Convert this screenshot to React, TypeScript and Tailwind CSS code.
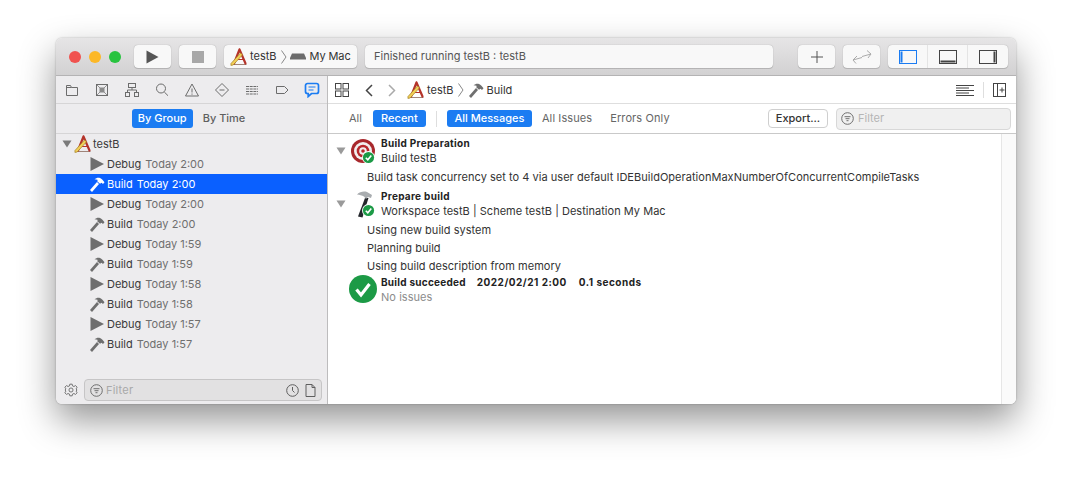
import type { ReactNode } from "react";

const times = [
  { kind: "Debug", time: "2:00" },
  { kind: "Build", time: "2:00", selected: true },
  { kind: "Debug", time: "2:00" },
  { kind: "Build", time: "2:00" },
  { kind: "Debug", time: "1:59" },
  { kind: "Build", time: "1:59" },
  { kind: "Debug", time: "1:58" },
  { kind: "Build", time: "1:58" },
  { kind: "Debug", time: "1:57" },
  { kind: "Build", time: "1:57" },
];

function XcodeIcon({ size = 18 }: { size?: number }) {
  return (
    <svg width={size} height={size} viewBox="0 0 18 18" fill="none">
      <path d="M1.5 16.500h15" stroke="#8a6a5a" strokeWidth="0.8" />
      <path d="M9.500 1.500 4 15.500M9.500 1.500 15.500 15.500" stroke="#b5332a" strokeWidth="2.200" strokeLinecap="round" />
      <path d="M5.500 11.500h8" stroke="#b5332a" strokeWidth="1.200" />
      <path d="M1 15.500 10.500 5l2 1.800-9.300 10.200-2.300.4z" fill="#f2cf57" stroke="#a08024" strokeWidth="0.7" />
    </svg>
  );
}

function Hammer({ color = "#6f6f6f", size = 16 }: { color?: string; size?: number }) {
  return (
    <svg width={size} height={size} viewBox="0 0 16 16">
      <path d="M1 14l2 2 7-8-2-2z" fill={color} />
      <path d="M5.500 3.200C7.200 1.800 9.400 1.200 11 2c1.700.8 3.300 2.500 4.500 4.200L14 8l-1.500-1.300-1.500 1-3-2.700 1-1C7.800 3.400 6.600 3.200 5.500 3.200z" fill={color} />
    </svg>
  );
}

function Play() {
  return (
    <svg width="16" height="16" viewBox="0 0 16 16">
      <path d="M1.500 1v14L15 8z" fill="#6e6e6e" />
    </svg>
  );
}

function Disclosure({ color = "#7a7a7a" }: { color?: string }) {
  return (
    <svg width="10" height="8" viewBox="0 0 10 8">
      <path d="M0.500 0.500h9L5 7.500z" fill={color} />
    </svg>
  );
}

function Glyph({ children, w = 16, h = 16, stroke = "#6c6c6c" }: { children: ReactNode; w?: number; h?: number; stroke?: string }) {
  return (
    <svg width={w} height={h} viewBox={`0 0 ${w} ${h}`} fill="none" stroke={stroke} strokeWidth="1">
      {children}
    </svg>
  );
}

function Check({ size = 13 }: { size?: number }) {
  return (
    <svg width={size} height={size} viewBox="0 0 13 13" className="block">
      <circle cx="6.500" cy="6.500" r="6.500" fill="#fff" />
      <circle cx="6.500" cy="6.500" r="5.600" fill="#1c9a46" />
      <path d="M3.800 6.700 5.800 8.800 9.300 4.400" fill="none" stroke="#fff" strokeWidth="1.600" />
    </svg>
  );
}

function NavIcons() {
  return (
    <div className="flex h-7 items-center border-b border-[#d6d5d6] pl-px pt-px">
      <div className="flex w-[30px] justify-center">
        <Glyph>
          <path d="M2.500 3.500h4l1 2h6v8h-11z" />
          <path d="M2.500 5.500h5" />
        </Glyph>
      </div>
      <div className="flex w-[30px] justify-center">
        <Glyph>
          <rect x="2.500" y="2.500" width="11" height="11" />
          <path d="M2.500 2.500l11 11M13.500 2.500l-11 11" strokeWidth="0.7" />
          <rect x="5.500" y="5.500" width="5" height="5" fill="#8a8a8a" stroke="none" />
        </Glyph>
      </div>
      <div className="flex w-[30px] justify-center">
        <Glyph>
          <rect x="4.500" y="1.500" width="7" height="4" />
          <rect x="1.500" y="10.500" width="4" height="4" />
          <rect x="10.500" y="10.500" width="4" height="4" />
          <path d="M3.500 10.500V8h9v2.500M8 5.500V8" />
        </Glyph>
      </div>
      <div className="flex w-[30px] justify-center">
        <Glyph>
          <circle cx="7" cy="6.500" r="4.500" />
          <path d="M10.300 10 14 13.700" />
        </Glyph>
      </div>
      <div className="flex w-[30px] justify-center">
        <Glyph>
          <path d="M8 2 14.500 14h-13z" />
          <path d="M8 6.500v4M8 11.500v1.200" />
        </Glyph>
      </div>
      <div className="flex w-[30px] justify-center">
        <Glyph>
          <path d="M8 1.500 14.500 8 8 14.500 1.500 8z" strokeLinejoin="round" />
          <path d="M5.500 8h5" />
        </Glyph>
      </div>
      <div className="flex w-[30px] justify-center">
        <Glyph>
          <path d="M2 4.500h12M2 7h12M2 9.500h12M2 12h12" strokeDasharray="3 0.7" />
        </Glyph>
      </div>
      <div className="flex w-[30px] justify-center">
        <Glyph>
          <path d="M2.500 4.500h8l3.500 3.500-3.500 3.500h-8z" />
        </Glyph>
      </div>
      <div className="flex w-[30px] justify-center">
        <svg width="16" height="16" viewBox="0 0 16 16" fill="none">
          <path d="M3.500 1.500h9a2 2 0 0 1 2 2v6a2 2 0 0 1-2 2H7.500L4.200 14.500v-3h-.7a2 2 0 0 1-2-2v-6a2 2 0 0 1 2-2z" stroke="#1b7cf2" strokeWidth="1.700" />
          <path d="M4.500 5h7M4.500 8h5" stroke="#1b7cf2" strokeWidth="1.200" />
        </svg>
      </div>
    </div>
  );
}

function FilterIcon() {
  return (
    <svg width="13" height="13" viewBox="0 0 13 13" fill="none" stroke="#6e6e6e">
      <circle cx="6.500" cy="6.500" r="5.800" />
      <path d="M3.500 4.700h6M4.500 6.700h4M5.500 8.700h2" />
    </svg>
  );
}

function Sidebar() {
  return (
    <aside className="flex w-[272px] flex-col border-r border-[#bdbcbd] bg-[#edecee]">
      <NavIcons />
      <div className="flex h-[30px] items-center justify-center border-b border-[#d6d5d6] pr-[7px] text-[11px] font-medium">
        <span className="ml-[1px] flex h-[19px] w-[61px] items-center justify-center rounded-[3px] bg-[#1b7cf2] text-white">By Group</span>
        <span className="ml-[10px] text-[#5f5f5f]">By Time</span>
      </div>
      <div className="flex-1">
        <div className="flex h-5 items-center pl-[6px] text-[11px] text-[#3a3a3a]">
          <Disclosure />
          <span className="ml-[2px] flex"><XcodeIcon /></span>
          <span className="ml-[1px]">testB</span>
        </div>
        {times.map((t, i) => (
          <div key={i} className={`flex h-5 items-center pl-[33px] text-[11px] ${t.selected ? "bg-[#0a60ff] text-white" : "text-[#3a3a3a]"}`}>
            <span className="flex w-4">
              {t.kind === "Debug" ? <Play /> : <Hammer color={t.selected ? "#ffffff" : "#6f6f6f"} />}
            </span>
            <span className="ml-[2px]">{t.kind}</span>
            <span className={`ml-[4px] ${t.selected ? "text-white" : "text-[#6f6f6f]"}`}>Today {t.time}</span>
          </div>
        ))}
      </div>
      <div className="flex h-[25px] items-start pl-[8px]">
        <svg width="14" height="14" viewBox="0 0 24 24" fill="none" stroke="#666" strokeWidth="1.500" className="mt-[4px]">
          <circle cx="12" cy="12" r="3.500" />
          <path d="M10 2h4l.6 3 2.500 1 2.600-1.600 2.800 2.800L20.900 10l1.100 2-1.100 2 1.600 2.800-2.800 2.800-2.600-1.600-2.500 1-.6 3h-4l-.6-3-2.500-1-2.600 1.600-2.800-2.800L3.100 14 2 12l1.100-2-1.600-2.800 2.800-2.800 2.600 1.600 2.500-1z" strokeLinejoin="round" />
        </svg>
        <div className="ml-[6px] flex h-[22px] w-[238px] items-center rounded-[4px] border border-[#c6c5c6] bg-[#e2e1e2] px-[5px] text-[11px] tracking-[0.2px] text-[#a9a9a9]">
          <FilterIcon />
          <span className="ml-[3px]">Filter</span>
          <span className="ml-auto flex items-center gap-[6px]">
            <svg width="13" height="13" viewBox="0 0 13 13" fill="none" stroke="#5e5e5e">
              <circle cx="6.500" cy="6.500" r="5.800" />
              <path d="M6.500 3v3.500l2 2" />
            </svg>
            <svg width="11" height="13" viewBox="0 0 11 13" fill="none" stroke="#5e5e5e">
              <path d="M1 .5h6l3 3v9H1zM7 .5v3h3" />
            </svg>
          </span>
        </div>
      </div>
    </aside>
  );
}

function Breadcrumb() {
  return (
    <div className="flex h-7 items-center border-b border-[#dedede] pl-[7px] pr-[10px] pt-px text-[11px] text-[#333]">
      <svg width="14" height="14" viewBox="0 0 14 14" fill="none" stroke="#444">
        <rect x=".5" y=".5" width="5.500" height="5.500" />
        <rect x="8" y=".5" width="5.500" height="5.500" />
        <rect x=".5" y="8" width="5.500" height="5.500" />
        <rect x="8" y="8" width="5.500" height="5.500" />
      </svg>
      <svg width="8" height="13" viewBox="0 0 8 13" fill="none" stroke="#444" strokeWidth="1.500" className="ml-[16px]">
        <path d="M7 1 1.500 6.500 7 12" />
      </svg>
      <svg width="8" height="13" viewBox="0 0 8 13" fill="none" stroke="#aaa" strokeWidth="1.500" className="ml-[15px]">
        <path d="M1 1l5.500 5.500L1 12" />
      </svg>
      <span className="ml-[11px] flex"><XcodeIcon /></span>
      <span className="ml-[2px]">testB</span>
      <svg width="6" height="14" viewBox="0 0 6 14" fill="none" stroke="#888" className="ml-[4px]">
        <path d="M.5.500 5 7 .5 13.500" />
      </svg>
      <span className="ml-[4px] flex"><Hammer /></span>
      <span className="ml-[3px]">Build</span>
      <svg width="18" height="13" viewBox="0 0 18 13" fill="none" stroke="#444" className="ml-auto">
        <path d="M0 1.500h18M0 4h13M0 6.500h18M0 9h13M0 11.500h18" />
      </svg>
      <span className="ml-[9px] h-4 w-px bg-[#dedede]" />
      <svg width="13" height="14" viewBox="0 0 13 14" fill="none" stroke="#444" className="ml-[9px]">
        <rect x=".5" y=".5" width="12" height="13" />
        <path d="M4.500.500v13M6.500 7h5M9 4.500v5" />
      </svg>
    </div>
  );
}

function FilterBar() {
  return (
    <div className="flex h-[30px] items-center border-b border-[#c9c9c9] text-[11px] text-[#666]">
      <span className="ml-[21px]">All</span>
      <span className="ml-[11px] flex h-[17px] w-[53px] items-center justify-center rounded-[3px] bg-[#1b7cf2] font-medium text-white">Recent</span>
      <span className="ml-[10px] h-4 w-px bg-[#dedede]" />
      <span className="ml-[10px] flex h-[17px] w-[85px] items-center justify-center rounded-[3px] bg-[#1b7cf2] font-medium text-white">All Messages</span>
      <span className="ml-[10px] tracking-[0.1px]">All Issues</span>
      <span className="ml-[18px] tracking-[0.1px]">Errors Only</span>
      <span className="ml-auto flex h-[19px] w-[60px] items-center justify-center rounded-[4px] border border-[#cfcfcf] bg-white font-medium text-[#333]">Export...</span>
      <div className="ml-[8px] mr-[5px] flex h-[22px] w-[175px] items-center rounded-[4px] border border-[#d8d8d8] bg-[#f0f0f0] px-[4px] text-[#b5b5b5]">
        <FilterIcon />
        <span className="ml-[4px]">Filter</span>
      </div>
    </div>
  );
}

function Line({ children, className = "" }: { children: ReactNode; className?: string }) {
  return <div className={`flex h-[18px] items-center pl-[39px] text-[11px] tracking-[0.03px] text-[#333] ${className}`}>{children}</div>;
}

function Group({ icon, title, sub, className = "" }: { icon: ReactNode; title: string; sub: string; className?: string }) {
  return (
    <div className={`flex h-[30px] ${className}`}>
      <span className="ml-[8px] mt-[11px]"><Disclosure color="#9a9a9a" /></span>
      <div className="relative ml-[5px] h-[30px] w-[25px]">{icon}</div>
      <div className="ml-[5px] text-[11px] leading-[15px]">
        <div className="text-[10px] font-bold tracking-[0.3px] text-[#222]">{title}</div>
        <div className="tracking-[0.03px] text-[#333]">{sub}</div>
      </div>
    </div>
  );
}

function TargetIcon() {
  return (
    <>
      <svg width="25" height="25" viewBox="0 0 25 25" className="mt-[3px]">
        <circle cx="12" cy="12" r="12" fill="#a8282c" />
        <circle cx="12" cy="12" r="9" fill="#f3eeee" />
        <circle cx="12" cy="12" r="6.300" fill="#b8282c" />
        <circle cx="12" cy="12" r="3.800" fill="#f3eeee" />
        <circle cx="12" cy="12" r="1.800" fill="#b8282c" />
      </svg>
      <span className="absolute left-[11px] top-[15px]"><Check /></span>
    </>
  );
}

function HammerBadgeIcon() {
  return (
    <>
      <svg width="20" height="30" viewBox="0 0 20 30" className="ml-[4px]">
        <path d="M10 9h3.500L7.500 28.500 3 27.500z" fill="#23262b" />
        <path d="M2 5.500C5 2.500 9 2 12 3l5 3-1 3-3-1-2 2-2-2.500C7 6.500 4.500 5.500 2 5.500z" fill="#a9adb0" />
      </svg>
      <span className="absolute left-[11px] top-[15px]"><Check /></span>
    </>
  );
}

function Log() {
  return (
    <div className="flex-1 border-r border-[#e6e6e6] pt-[2px]">
      <Group icon={<TargetIcon />} title="Build Preparation" sub="Build testB" />
      <Line className="mt-[2px]">Build task concurrency set to 4 via user default IDEBuildOperationMaxNumberOfConcurrentCompileTasks</Line>
      <Group className="mt-[3px]" icon={<HammerBadgeIcon />} title="Prepare build" sub="Workspace testB | Scheme testB | Destination My Mac" />
      <Line className="mt-[2px]">Using new build system</Line>
      <Line>Planning build</Line>
      <Line>Using build description from memory</Line>
      <div className="flex h-[30px]">
        <svg width="28" height="28" viewBox="0 0 28 28" className="ml-[21px]">
          <circle cx="14" cy="14" r="14" fill="#1c9a46" />
          <path d="M7.500 14.500 12 20l8.500-11" fill="none" stroke="#fff" strokeWidth="3.200" />
        </svg>
        <div className="ml-[4px] text-[11px] leading-[15px]">
          <div className="flex text-[10px] font-bold text-[#222]">
            <span className="tracking-[0.25px]">Build succeeded</span>
            <span className="ml-[11px] tracking-[0.5px]">2022/02/21 2:00</span>
            <span className="ml-[12px] tracking-[0.5px]">0.1 seconds</span>
          </div>
          <div className="tracking-[0.05px] text-[#8c8c8c]">No issues</div>
        </div>
      </div>
    </div>
  );
}

function TitleButton({ children, className = "" }: { children: ReactNode; className?: string }) {
  return (
    <div className={`flex h-[23px] items-center justify-center rounded-[4px] bg-[#f8f8f8] shadow-[0_0_1px_rgba(0,0,0,0.35),0_1px_0_rgba(0,0,0,0.12)] ${className}`}>
      {children}
    </div>
  );
}

function TitleBar() {
  return (
    <header className="flex h-[38px] items-center border-b border-[#b4b3b4] bg-gradient-to-b from-[#e6e5e6] to-[#d2d1d2] pl-[13px] pr-[8px]">
      <span className="h-3 w-3 rounded-full bg-[#f0524f]" />
      <span className="ml-2 h-3 w-3 rounded-full bg-[#fcb827]" />
      <span className="ml-2 h-3 w-3 rounded-full bg-[#28c33f]" />
      <TitleButton className="ml-[13px] w-[37px]">
        <svg width="13" height="14" viewBox="0 0 13 14"><path d="M.5.500v13L12.500 7z" fill="#555" /></svg>
      </TitleButton>
      <TitleButton className="ml-2 w-[37px]">
        <span className="h-3 w-3 bg-[#a8a8a8]" />
      </TitleButton>
      <TitleButton className="ml-2 w-[133px] justify-start pl-[6px] text-[11px] text-[#333]">
        <XcodeIcon />
        <span className="ml-[2px]">testB</span>
        <svg width="6" height="14" viewBox="0 0 6 14" fill="none" stroke="#888" className="ml-[4px]">
          <path d="M.5.500 5 7 .5 13.500" />
        </svg>
        <svg width="16" height="7" viewBox="0 0 16 7" className="ml-[3px]">
          <path d="M2 .5h12l2 4.500v1.500H0V5z" fill="#6c6c6c" />
        </svg>
        <span className="ml-[4px] tracking-[-0.1px]">My Mac</span>
      </TitleButton>
      <TitleButton className="ml-2 w-[408px] justify-start pl-[9px] text-[11px] text-[#555]">Finished running testB : testB</TitleButton>
      <TitleButton className="ml-[25px] w-[37px]">
        <svg width="12" height="12" viewBox="0 0 12 12" stroke="#555"><path d="M6 0v12M0 6h12" /></svg>
      </TitleButton>
      <TitleButton className="ml-2 w-[37px]">
        <svg width="20" height="14" viewBox="0 0 20 14" fill="none" stroke="#aaa">
          <path d="M10 6.500l9-2.500M15 .5l4 3.500-3 4" />
          <path d="M10 7.500l-9 2.500M5 6l-4 4 3 3.500" />
        </svg>
      </TitleButton>
      <TitleButton className="ml-2 w-[120px]">
        <div className="flex h-full w-10 items-center justify-center border-r border-[#e4e4e4]">
          <svg width="18" height="14" viewBox="0 0 18 14" fill="none" stroke="#1b7cf2">
            <rect x=".5" y=".5" width="17" height="13" />
            <rect x="1.500" y="1.500" width="2" height="11" fill="#1b7cf2" stroke="none" />
          </svg>
        </div>
        <div className="flex h-full w-10 items-center justify-center border-r border-[#e4e4e4]">
          <svg width="18" height="14" viewBox="0 0 18 14" fill="none" stroke="#444">
            <rect x=".5" y=".5" width="17" height="13" />
            <rect x="1.500" y="10.500" width="15" height="2" fill="#444" stroke="none" />
          </svg>
        </div>
        <div className="flex h-full w-10 items-center justify-center">
          <svg width="18" height="14" viewBox="0 0 18 14" fill="none" stroke="#444">
            <rect x=".5" y=".5" width="17" height="13" />
            <rect x="14.500" y="1.500" width="2" height="11" fill="#444" stroke="none" />
          </svg>
        </div>
      </TitleButton>
    </header>
  );
}

export default function App() {
  return (
    <div className="h-[478px] w-[1072px] overflow-hidden bg-white pl-[56px] pt-[38px] font-['Inter',sans-serif]">
      <div className="flex h-[366px] w-[960px] flex-col overflow-hidden rounded-[6px] shadow-[0_16px_36px_rgba(0,0,0,0.42),0_0_2px_rgba(0,0,0,0.3)]">
        <TitleBar />
        <div className="flex min-h-0 flex-1">
          <Sidebar />
          <main className="flex flex-1 flex-col bg-white">
            <Breadcrumb />
            <FilterBar />
            <div className="flex flex-1">
              <Log />
              <div className="w-[14px] bg-[#fafafa]" />
            </div>
          </main>
        </div>
      </div>
    </div>
  );
}
